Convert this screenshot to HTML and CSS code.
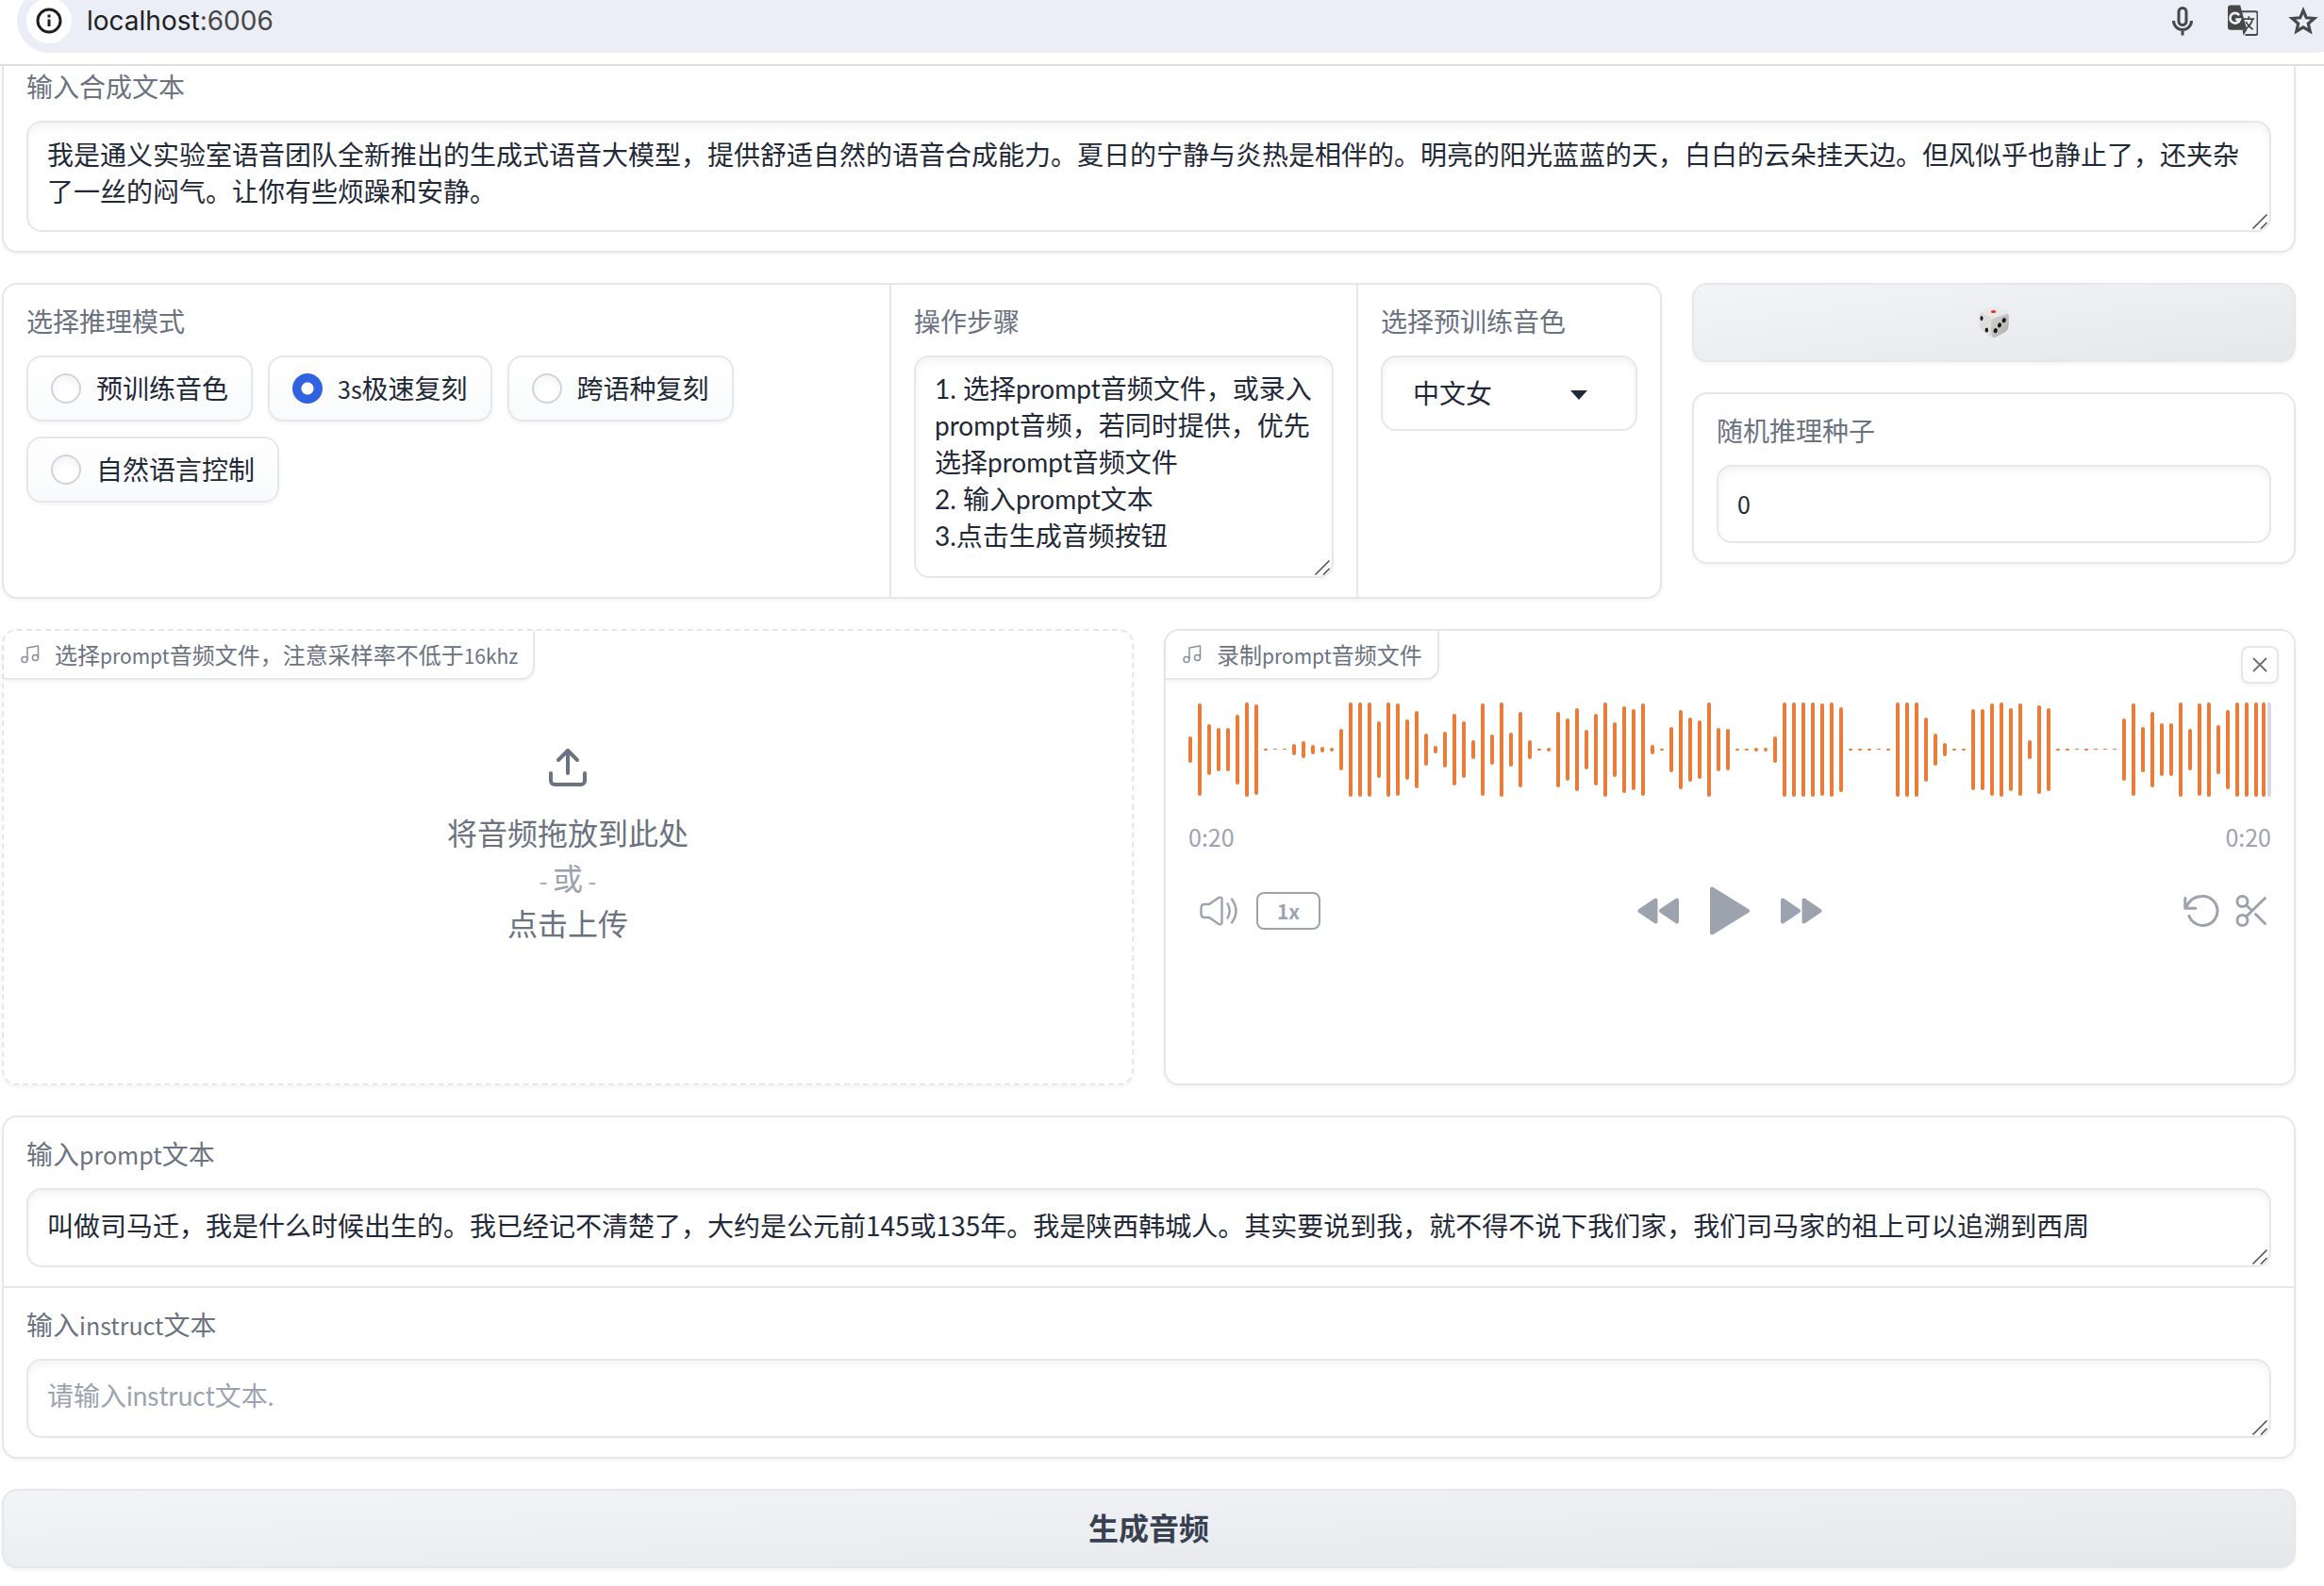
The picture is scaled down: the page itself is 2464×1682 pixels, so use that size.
FILE: index.html
```html
<!DOCTYPE html>
<html lang="zh-CN">
<head>
<meta charset="utf-8">
<meta name="viewport" content="width=device-width, initial-scale=1">
<title>CosyVoice</title>
<link rel="stylesheet" href="styles.css">
</head>
<body>
<header class="browser-bar">
  <div class="omnibox">
    <button class="site-info" type="button" aria-label="网站信息">
      <svg width="28" height="28" viewBox="0 0 28 28" fill="none" stroke="#1f1f1f" stroke-width="3"><circle cx="14" cy="14" r="12"/><path d="M14 12.500v7.500"/><path d="M14 7.500v3"/></svg>
    </button>
    <div class="address">localhost<span class="port">:6006</span></div>
    <div class="bar-actions">
      <svg width="32" height="32" viewBox="-4 0 32 32" fill="none" stroke="#474747" stroke-width="3"><rect x="8" y="2.500" width="8" height="18" rx="4"/><path d="M2.500 16a9.500 9.500 0 0 0 19 0M12 26v5.500"/></svg>
      <svg width="32" height="34" viewBox="0 0 33 34"><path d="M14 7h16.500a2 2 0 0 1 2 2v21.500a2 2 0 0 1-2 2H19" fill="none" stroke="#474747" stroke-width="2"/><path d="M3 0h10.500l7.500 27H3a3 3 0 0 1-3-3V3a3 3 0 0 1 3-3z" fill="#474747"/><path d="M16 27h5l-4 6z" fill="#474747"/><path d="M12.500 11a5.500 5.500 0 1 0 .8 4.500H8.500" fill="none" stroke="#eceef7" stroke-width="2.800"/><path d="M17.500 15H29M23 12v3M27 15.500c-1 5-4 8-8 11M20 18c1 3 4 6 7.500 8.500" fill="none" stroke="#474747" stroke-width="1.800"/></svg>
      <svg width="32" height="32" viewBox="0 0 32 32" fill="none" stroke="#474747" stroke-width="3.200"><path d="M16 5l3.300 7.800 8.400.7-6.400 5.500 1.900 8.200L16 22.900l-7.200 4.300 1.900-8.200-6.400-5.500 8.400-.7z"/></svg>
    </div>
  </div>
</header>

<svg width="0" height="0" class="symbols" aria-hidden="true">
  <symbol id="note" viewBox="0 0 20 20"><g fill="none" stroke="#8a90a0" stroke-width="1.500" stroke-linejoin="round"><path d="M7 15.500V3l11.500-2v12.500"/><circle cx="4" cy="15.500" r="3"/><circle cx="15.500" cy="13.500" r="3"/></g></symbol>
  <symbol id="grip" viewBox="0 0 16 16"><path d="M.5 15.500l15-15M9 15.500l6.500-6.500" fill="none" stroke="#4b4b4b" stroke-width="1.500"/></symbol>
</svg>

<main class="app">
  <section class="card card-cut">
    <div class="cell">
      <label class="label" for="tts">输入合成文本</label>
      <div class="field-wrap">
        <textarea class="field field-multi" id="tts" rows="2">我是通义实验室语音团队全新推出的生成式语音大模型，提供舒适自然的语音合成能力。夏日的宁静与炎热是相伴的。明亮的阳光蓝蓝的天，白白的云朵挂天边。但风似乎也静止了，还夹杂了一丝的闷气。让你有些烦躁和安静。</textarea>
        <svg class="grip" width="16" height="16"><use href="#grip"/></svg>
      </div>
    </div>
  </section>

  <div class="row row-options">
    <section class="card options">
      <fieldset class="cell">
        <legend class="label">选择推理模式</legend>
        <div class="choices">
          <label class="choice"><input class="radio" type="radio" name="mode"><span>预训练音色</span></label>
          <label class="choice"><input class="radio" type="radio" name="mode" checked><span><span class="latin">3s</span>极速复刻</span></label>
          <label class="choice"><input class="radio" type="radio" name="mode"><span>跨语种复刻</span></label>
          <label class="choice"><input class="radio" type="radio" name="mode"><span>自然语言控制</span></label>
        </div>
      </fieldset>
      <div class="cell">
        <label class="label" for="steps">操作步骤</label>
        <div class="field-wrap">
          <textarea class="field field-multi field-steps" id="steps" rows="5">1. 选择prompt音频文件，或录入prompt音频，若同时提供，优先选择prompt音频文件
2. 输入prompt文本
3.点击生成音频按钮</textarea>
          <svg class="grip" width="16" height="16"><use href="#grip"/></svg>
        </div>
      </div>
      <div class="cell">
        <label class="label" for="voice">选择预训练音色</label>
        <div class="field-wrap">
          <select class="field select" id="voice"><option>中文女</option></select>
          <svg class="caret" width="18" height="10" viewBox="0 0 18 10"><path d="M0 0h18L9 10z" fill="#1f2937"/></svg>
        </div>
      </div>
    </section>
    <div class="stack">
      <button class="btn" type="button" aria-label="随机种子">
        <svg width="32" height="32" viewBox="0 0 32 32"><defs><linearGradient id="face" x1="0" y1="0" x2="1" y2="1"><stop offset="0" stop-color="#d3d4d2"/><stop offset="1" stop-color="#adaeac"/></linearGradient></defs><path d="M0 10Q0 6 4 4L13 .5q2-.7 5 0l10 3q4 1.500 4 6L31.500 20q-.3 4-3.500 6l-9 5q-4 2-7 0L4 25q-3-2-3.200-6z" fill="#dddedc"/><path d="M13 16q0-4 4-5l11-3.500q4-1 4 3L31.500 20q-.3 4-3.500 6l-9 5q-2 1-4 1-2-4-2-8z" fill="url(#face)"/><path d="M2.500 5L13 .5q2-.7 5 0l10 3q2 .8 3 2.500-7 2-14 5-2 1-4 0Q8 8 2.500 5z" fill="#e9eae8"/><ellipse cx="15.500" cy="4.500" rx="2.800" ry="1.500" fill="#e0352f"/><g fill="#161616"><ellipse cx="3" cy="11.500" rx="1.500" ry="2.600"/><ellipse cx="8.300" cy="24" rx="1.700" ry="2.600"/><ellipse cx="26.700" cy="13.700" rx="2" ry="2.600" transform="rotate(20 26.700 13.700)"/><ellipse cx="22" cy="18.900" rx="2" ry="2.600" transform="rotate(20 22 18.900)"/><ellipse cx="17.700" cy="24.700" rx="2" ry="2.600" transform="rotate(20 17.700 24.700)"/></g></svg>
      </button>
      <section class="card">
        <div class="cell">
          <label class="label" for="seed">随机推理种子</label>
          <input class="field field-number" id="seed" type="text" inputmode="numeric" value="0">
        </div>
      </section>
    </div>
  </div>

  <div class="row row-audio">
    <section class="card card-dashed">
      <div class="tag"><svg width="20" height="20"><use href="#note"/></svg><span>选择<span class="latin-small">prompt</span>音频文件，注意采样率不低于<span class="latin-small">16khz</span></span></div>
      <button class="dropzone" type="button">
        <svg width="48" height="48" viewBox="0 0 24 24" fill="none" stroke="#6b7280" stroke-width="2" stroke-linecap="round" stroke-linejoin="round"><path d="M21 15v4a2 2 0 0 1-2 2H5a2 2 0 0 1-2-2v-4"/><path d="M17 8l-5-5-5 5"/><path d="M12 3v12"/></svg>
        <span class="drop-text">将音频拖放到此处<span class="drop-or"><span class="latin">- </span>或<span class="latin"> -</span></span>点击上传</span>
      </button>
    </section>

    <section class="card">
      <div class="tag"><svg width="20" height="20"><use href="#note"/></svg><span>录制<span class="latin-small">prompt</span>音频文件</span></div>
      <button class="close" type="button" aria-label="清除"><svg width="16" height="16" viewBox="0 0 16 16" stroke="#6b7280" stroke-width="2" stroke-linecap="round"><path d="M1.500 1.500l13 13M14.500 1.500l-13 13"/></svg></button>
      <div class="player">
        <svg class="wave" id="wave" viewBox="0 0 1148 100" preserveAspectRatio="none" role="img" aria-label="波形"></svg>
        <div class="times"><time>0:20</time><time>0:20</time></div>
        <div class="controls">
          <div class="group group-left">
            <button class="icon-btn" type="button" aria-label="音量"><svg width="40" height="32" viewBox="0 0 40 32" fill="none" stroke="#9ca3af" stroke-width="2.400" stroke-linecap="round" stroke-linejoin="round"><path d="M10 9L20.500 1.800Q23.500 1 23.500 4v24q0 3-3 2.200L10 23H5q-3.500 0-3.500-4v-6q0-4 3.500-4z"/><path d="M29.500 8.500q4.500 7.500 0 15"/><path d="M34 3.500q9 12.500 0 25"/></svg></button>
            <button class="speed" type="button">1x</button>
          </div>
          <div class="group group-mid">
            <button class="icon-btn" type="button" aria-label="后退"><svg width="44" height="28" viewBox="0 0 44 28" fill="#9ca3af" stroke="#9ca3af" stroke-width="4" stroke-linejoin="round"><path d="M19.500 2.500v23L2.500 14z"/><path d="M42 2.500v23L25 14z"/></svg></button>
            <button class="icon-btn" type="button" aria-label="播放"><svg width="42" height="52" viewBox="0 0 42 52" fill="#9ca3af" stroke="#9ca3af" stroke-width="4" stroke-linejoin="round"><path d="M2 2.500v47L40 26z"/></svg></button>
            <button class="icon-btn" type="button" aria-label="前进"><svg width="44" height="28" viewBox="0 0 44 28" fill="#9ca3af" stroke="#9ca3af" stroke-width="4" stroke-linejoin="round"><path d="M2 2.500v23L19 14z"/><path d="M24.500 2.500v23L41.500 14z"/></svg></button>
          </div>
          <div class="group group-right">
            <button class="icon-btn" type="button" aria-label="撤销"><svg width="38" height="34" viewBox="0 0 38 34" fill="none" stroke="#9ca3af" stroke-width="3" stroke-linecap="round" stroke-linejoin="round"><path d="M1.800 3.500v10.700h11"/><path d="M2.500 13.500C6 6 12 1.500 20 1.500a15.500 15.500 0 1 1-14 21"/></svg></button>
            <button class="icon-btn" type="button" aria-label="剪辑"><svg width="34" height="34" viewBox="0 0 34 34" fill="none" stroke="#9ca3af" stroke-width="3" stroke-linecap="round"><circle cx="7.500" cy="7" r="5.500"/><circle cx="7.500" cy="27" r="5.500"/><path d="M31.500 3.500L11.500 23"/><path d="M21.500 20.500l10 10"/><path d="M11.500 11l6 5.500"/></svg></button>
          </div>
        </div>
      </div>
    </section>
  </div>

  <section class="card card-texts">
    <div class="cell">
      <label class="label" for="prompt">输入<span class="latin">prompt</span>文本</label>
      <div class="field-wrap">
        <textarea class="field field-single" id="prompt" rows="1">叫做司马迁，我是什么时候出生的。我已经记不清楚了，大约是公元前145或135年。我是陕西韩城人。其实要说到我，就不得不说下我们家，我们司马家的祖上可以追溯到西周</textarea>
        <svg class="grip" width="16" height="16"><use href="#grip"/></svg>
      </div>
    </div>
    <div class="cell">
      <label class="label" for="instruct">输入<span class="latin">instruct</span>文本</label>
      <div class="field-wrap">
        <textarea class="field field-single field-hint" id="instruct" rows="1" placeholder="请输入instruct文本."></textarea>
        <svg class="grip" width="16" height="16"><use href="#grip"/></svg>
      </div>
    </div>
  </section>

  <button class="btn btn-wide" type="button">生成音频</button>
</main>
<script src="wave.js"></script>
</body>
</html>
```
FILE: styles.css
```css
:root {
  --line: #e5e7eb;
  --muted: #6b7280;
  --soft: #9ca3af;
  --ink: #1f2937;
  --cjk: "Noto Sans CJK SC", sans-serif;
}

* { box-sizing: border-box; }

body {
  margin: 0;
  background: #fff;
  color: var(--ink);
  font-family: var(--cjk);
  font-size: 28px;
  line-height: 39px;
}

button, input, textarea, select {
  margin: 0;
  font: inherit;
  color: inherit;
}

button { cursor: pointer; }
svg { display: block; flex: none; }
.symbols { position: absolute; }

/* Browser address bar, cut off at the top of the window */
.browser-bar {
  height: 70px;
  overflow: hidden;
  border-bottom: 2px solid #dddedf;
}

.omnibox {
  display: flex;
  align-items: center;
  height: 68px;
  margin: -12px -26px 0 18px;
  padding: 0 32px 0 10px;
  border-radius: 34px;
  background: #eceef7;
}

.site-info {
  display: grid;
  place-items: center;
  width: 48px;
  height: 48px;
  padding: 0;
  border: 0;
  border-radius: 50%;
  background: #fff;
}

.address {
  flex: 1;
  margin-left: 16px;
  color: #1f1f1f;
  font-family: Inter, sans-serif;
  font-size: 28px;
}

.port { color: #474747; }

.bar-actions {
  display: flex;
  align-items: center;
  gap: 32px;
}

.app {
  display: flex;
  flex-direction: column;
  gap: 32px;
  padding: 0 30px 19px 2px;
}

.card {
  position: relative;
  border: 2px solid var(--line);
  border-radius: 16px;
  background: #fff;
  box-shadow: 0 2px 4px rgba(0, 0, 0, .05);
}

.card-cut {
  border-top: 0;
  border-radius: 0 0 16px 16px;
}

.cell {
  min-width: 0;
  margin: 0;
  padding: 20px 24px;
  border: 0;
}

.card-cut .cell { padding-top: 3px; }

.label {
  display: block;
  margin-bottom: 19px;
  padding: 0;
  color: var(--muted);
  line-height: 36px;
}

legend.label { float: left; width: 100%; }
.choices { clear: both; }

.latin { font-size: 25px; line-height: 1; }
.latin-small { font-size: 21px; line-height: 1; }

.field-wrap { position: relative; }

.field {
  display: block;
  width: 100%;
  padding: 18px 20px;
  border: 2px solid var(--line);
  border-radius: 16px;
  background: #fff;
  box-shadow: inset 0 4px 8px rgba(0, 0, 0, .05);
  outline: none;
}

textarea.field { resize: vertical; overflow: hidden; }
textarea.field::-webkit-resizer { display: none; }
.field::placeholder { color: var(--soft); opacity: 1; }
.field-multi { height: 118px; padding-top: 14px; }
.field-steps { height: 236px; font-family: Lato, var(--cjk); }
.field-single { height: 84px; }
.field-hint { font-family: Lato, var(--cjk); }
.field-number { height: 83px; padding-bottom: 20px; font-size: 25px; }

.grip {
  position: absolute;
  right: 4px;
  bottom: 3px;
  pointer-events: none;
}

.row { display: grid; gap: 32px; }
.row-options { grid-template-columns: 1760fr 640fr; }
.row-audio { grid-template-columns: 1fr 1fr; }

.options {
  display: grid;
  grid-template-columns: 939fr 493fr 320fr;
  gap: 2px;
}

.options .cell + .cell { box-shadow: -2px 0 0 var(--line); }

.choices {
  display: flex;
  flex-wrap: wrap;
  gap: 16px;
}

.choice {
  display: flex;
  align-items: center;
  gap: 16px;
  height: 70px;
  padding: 0 24px;
  border: 2px solid var(--line);
  border-radius: 16px;
  background: linear-gradient(to bottom, #fff, #f9fafb);
  box-shadow: 0 2px 4px rgba(0, 0, 0, .05);
}

.choice > span { padding-bottom: 2px; }

.radio {
  appearance: none;
  width: 32px;
  height: 32px;
  border: 2px solid #d1d5db;
  border-radius: 50%;
  background: #fff;
  box-shadow: inset 0 4px 8px rgba(0, 0, 0, .05);
}

.radio:checked {
  border-color: #3162e0;
  background: radial-gradient(circle, #fff 6px, #3162e0 7px);
  box-shadow: none;
}

.select {
  appearance: none;
  height: 80px;
  padding: 0 32px 2px;
}

.caret {
  position: absolute;
  top: 37px;
  right: 53px;
  pointer-events: none;
}

.stack {
  display: flex;
  flex-direction: column;
  gap: 32px;
}

.btn {
  display: grid;
  place-items: center;
  height: 84px;
  border: 2px solid var(--line);
  border-radius: 16px;
  background: linear-gradient(to bottom right, #f3f4f6, #e5e7eb);
  box-shadow: 0 2px 4px rgba(0, 0, 0, .05);
}

.btn-wide {
  padding-bottom: 4px;
  color: #374151;
  font-size: 32px;
  font-weight: 700;
}

.row-audio .card { min-height: 484px; }
.card-dashed {
  display: flex;
  flex-direction: column;
  align-items: flex-start;
  border-style: dashed;
}

.tag {
  display: flex;
  align-items: center;
  gap: 16px;
  width: fit-content;
  height: 52px;
  padding: 0 16px 0 18px;
  border: solid var(--line);
  border-width: 0 2px 2px 0;
  border-radius: 14px 0 14px 0;
  background: #fff;
  box-shadow: 0 2px 4px rgba(0, 0, 0, .05);
  color: var(--muted);
  font-size: 24px;
}

.tag > span { padding-bottom: 2px; }

.dropzone {
  display: flex;
  flex: 1;
  flex-direction: column;
  align-items: center;
  gap: 20px;
  width: 100%;
  padding: 69px 0 0;
  border: 0;
  background: none;
  color: var(--muted);
}

.drop-text { font-size: 32px; line-height: 48px; }
.drop-or { display: block; color: var(--soft); }

.close {
  position: absolute;
  top: 16px;
  right: 16px;
  display: grid;
  place-items: center;
  width: 40px;
  height: 40px;
  padding: 0;
  border: 2px solid var(--line);
  border-radius: 8px;
  background: #fff;
  box-shadow: 0 2px 4px rgba(0, 0, 0, .05);
}

.player { padding: 24px; }
.wave { width: 100%; height: 100px; }

.times {
  display: flex;
  justify-content: space-between;
  margin: 23px 0 33px;
  color: var(--soft);
  font-size: 25px;
}

.controls {
  display: grid;
  grid-template-columns: 1fr auto 1fr;
  align-items: center;
}

.group { display: flex; align-items: center; }
.group-left { gap: 20px; padding-left: 12px; }
.group-mid { gap: 33px; }
.group-right { justify-content: flex-end; gap: 17px; padding-right: 4px; }

.icon-btn {
  padding: 0;
  border: 0;
  background: none;
}

.speed {
  width: 68px;
  height: 40px;
  padding: 0;
  border: 2px solid var(--soft);
  border-radius: 8px;
  background: none;
  color: var(--soft);
  font-size: 21px;
  font-weight: 700;
  line-height: 36px;
}

.card-texts .cell + .cell { border-top: 2px solid var(--line); }
```
FILE: wave.js
```js
// Bar heights of the recording, in percent of the track height.
const levels = [
  28, 98, 54, 46, 46, 74, 100, 96, 2, 1, 1, 12, 18, 10, 6, 4, 44, 100, 100, 100,
  60, 100, 98, 64, 82, 34, 8, 38, 76, 60, 20, 98, 32, 100, 36, 80, 20, 2, 4, 80,
  66, 88, 42, 76, 100, 58, 92, 86, 98, 10, 2, 48, 84, 68, 62, 100, 46, 44, 2, 2,
  4, 4, 28, 100, 100, 100, 100, 98, 100, 90, 2, 2, 2, 1, 2, 100, 100, 100, 68, 34,
  14, 2, 2, 86, 86, 98, 100, 88, 98, 20, 94, 88, 2, 2, 1, 2, 1, 1, 1, 66,
  98, 48, 80, 56, 56, 100, 44, 98, 100, 52, 84, 100, 100, 100
];

const wave = document.getElementById("wave");

function addBar(x, height, color) {
  const bar = document.createElementNS("http://www.w3.org/2000/svg", "rect");
  bar.setAttribute("x", x);
  bar.setAttribute("y", Math.floor(50 - height / 2));
  bar.setAttribute("width", 4);
  bar.setAttribute("height", height);
  bar.setAttribute("rx", Math.min(2, height / 2));
  bar.setAttribute("fill", color);
  wave.append(bar);
}

levels.forEach((height, i) => addBar(i * 10, height, "#e97c38"));
addBar(1138, 100, "#e97c38"); // playhead
addBar(1144, 100, "#dbd5e8"); // not played yet
```
